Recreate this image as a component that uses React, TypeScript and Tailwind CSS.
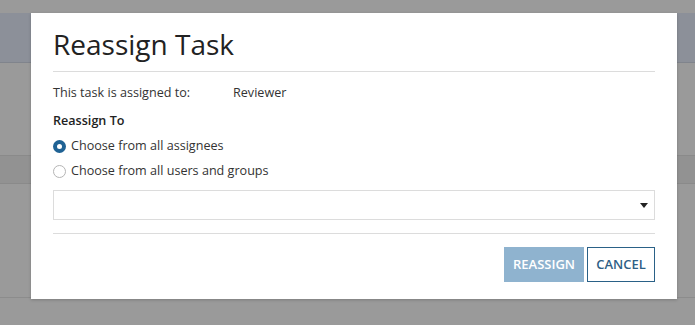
import { useState } from "react"

const App = () => {
  const [choice, setChoice] = useState("assignees")

  return (
    <div className="relative w-[695px] h-[325px] overflow-hidden bg-[#9a9a9a] font-['Open_Sans',sans-serif]">
      {/* page behind the overlay */}
      <div className="h-[13px]" />
      <div className="h-[50px] bg-[#8c9099] border-b border-[#80848c]" />
      <div className="h-[92px]" />
      <div className="h-[29px] bg-[#929292] border-y border-[#8a8a8a]" />
      <div className="h-[113px]" />
      <div className="border-t border-[#8c8c8c]" />

      {/* modal */}
      <div className="absolute left-[31px] top-[13px] w-[646px] h-[286px] bg-white shadow-[0_1px_3px_rgba(0,0,0,0.2)] px-[22px]">
        <h2 className="pt-[14px] pb-[10px] text-[28px] leading-[34px] text-[#222] border-b border-[#dcdcdc]">
          Reassign Task
        </h2>

        <div className="flex mt-[12px] text-[12.6px] leading-[18px] text-[#333]">
          <span className="w-[180px]">This task is assigned to:</span>
          <span>Reviewer</span>
        </div>

        <div className="mt-[10px] text-[12.6px] leading-[18px] font-semibold text-[#222]">Reassign To</div>

        <div className="mt-[7px] flex flex-col gap-[7px] text-[12.6px] leading-[18px] text-[#333]">
          <label className="flex items-center gap-[5px] cursor-pointer" onClick={() => setChoice("assignees")}>
            <span className={choice === "assignees"
              ? "w-[13px] h-[13px] rounded-full bg-[#1f6294] flex items-center justify-center"
              : "w-[13px] h-[13px] rounded-full border border-[#b5b5b5]"}>
              {choice === "assignees" && <span className="w-[5px] h-[5px] rounded-full bg-white" />}
            </span>
            Choose from all assignees
          </label>
          <label className="flex items-center gap-[5px] cursor-pointer" onClick={() => setChoice("all")}>
            <span className={choice === "all"
              ? "w-[13px] h-[13px] rounded-full bg-[#1f6294] flex items-center justify-center"
              : "w-[13px] h-[13px] rounded-full border border-[#b5b5b5]"}>
              {choice === "all" && <span className="w-[5px] h-[5px] rounded-full bg-white" />}
            </span>
            Choose from all users and groups
          </label>
        </div>

        <div className="mt-[10px] h-[30px] border border-[#dcdcdc] flex items-center justify-end pr-[6px]">
          <svg width="8" height="5" viewBox="0 0 8 5">
            <path d="M0 0h8L4 5z" fill="#222" />
          </svg>
        </div>

        <div className="mt-[13px] border-t border-[#dcdcdc]" />

        <div className="mt-[13px] flex justify-end gap-[3px]">
          <button className="h-[35px] w-[80px] bg-[#8fb3cf] text-white text-[13px] font-semibold">
            REASSIGN
          </button>
          <button className="h-[35px] w-[68px] border border-[#2a6187] text-[#2e5f86] text-[13px] font-semibold">
            CANCEL
          </button>
        </div>
      </div>
    </div>
  )
}

export default App
